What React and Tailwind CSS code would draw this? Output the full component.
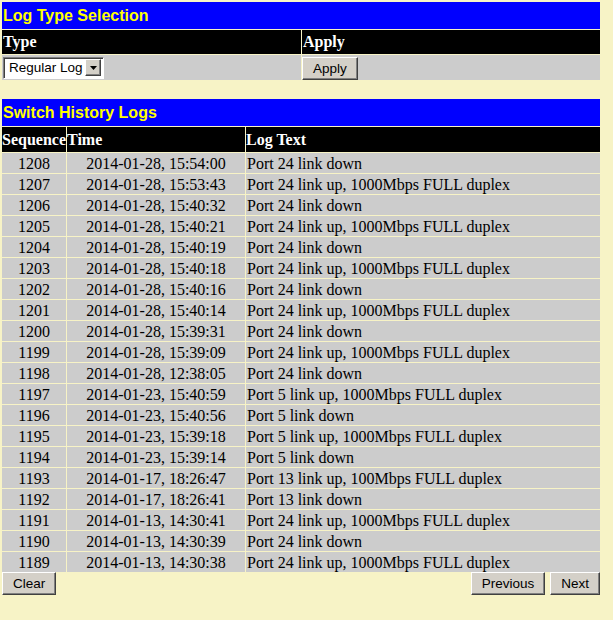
// App.jsx — Switch history log page (Log Type Selection + Switch History Logs table)

const logs = [
    [1208, '2014-01-28, 15:54:00', 'Port 24 link down'],
    [1207, '2014-01-28, 15:53:43', 'Port 24 link up, 1000Mbps FULL duplex'],
    [1206, '2014-01-28, 15:40:32', 'Port 24 link down'],
    [1205, '2014-01-28, 15:40:21', 'Port 24 link up, 1000Mbps FULL duplex'],
    [1204, '2014-01-28, 15:40:19', 'Port 24 link down'],
    [1203, '2014-01-28, 15:40:18', 'Port 24 link up, 1000Mbps FULL duplex'],
    [1202, '2014-01-28, 15:40:16', 'Port 24 link down'],
    [1201, '2014-01-28, 15:40:14', 'Port 24 link up, 1000Mbps FULL duplex'],
    [1200, '2014-01-28, 15:39:31', 'Port 24 link down'],
    [1199, '2014-01-28, 15:39:09', 'Port 24 link up, 1000Mbps FULL duplex'],
    [1198, '2014-01-28, 12:38:05', 'Port 24 link down'],
    [1197, '2014-01-23, 15:40:59', 'Port 5 link up, 1000Mbps FULL duplex'],
    [1196, '2014-01-23, 15:40:56', 'Port 5 link down'],
    [1195, '2014-01-23, 15:39:18', 'Port 5 link up, 1000Mbps FULL duplex'],
    [1194, '2014-01-23, 15:39:14', 'Port 5 link down'],
    [1193, '2014-01-17, 18:26:47', 'Port 13 link up, 100Mbps FULL duplex'],
    [1192, '2014-01-17, 18:26:41', 'Port 13 link down'],
    [1191, '2014-01-13, 14:30:41', 'Port 24 link up, 1000Mbps FULL duplex'],
    [1190, '2014-01-13, 14:30:39', 'Port 24 link down'],
    [1189, '2014-01-13, 14:30:38', 'Port 24 link up, 1000Mbps FULL duplex'],
]

function Button({ children }) {
    return (
        <button className="h-[23px] px-[10px] bg-[#d4d0c8] text-black text-[13.5px] leading-none font-['Liberation_Sans',Arial,sans-serif] border border-t-white border-l-white border-b-[#404040] border-r-[#404040] shadow-[inset_-1px_-1px_#808080]">
            {children}
        </button>
    )
}

function Title({ children, colSpan }) {
    return (
        <tr>
            <td colSpan={colSpan} className="h-[27px] p-0 pl-[1px] bg-[#0000ff] text-[#ffff00] text-[16px] font-bold font-['Liberation_Sans',Arial,sans-serif]">
                {children}
            </td>
        </tr>
    )
}

function Th({ children, className = '' }) {
    return (
        <td className={`p-0 pl-[1px] bg-black text-white text-[16px] font-bold font-['Liberation_Serif','Times_New_Roman',serif] ${className}`}>
            {children}
        </td>
    )
}

export default function App() {
    return (
        <div className="min-h-[620px] w-[613px] bg-[#f7f3c6] pl-px pt-px">
            {/* Log type selection */}
            <table className="w-[600px] table-fixed border-separate border-spacing-[1px]">
                <colgroup>
                    <col className="w-[299px]" />
                    <col />
                </colgroup>
                <tbody>
                    <Title colSpan={2}>Log Type Selection</Title>
                    <tr className="h-[24px]">
                        <Th>Type</Th>
                        <Th>Apply</Th>
                    </tr>
                    <tr className="h-[25px]">
                        <td className="p-0 pl-[1px] bg-[#cccccc] align-middle">
                            <div className="flex items-center h-[22px] w-[101px] bg-white border border-t-[#808080] border-l-[#808080] border-b-white border-r-white shadow-[inset_1px_1px_#404040]">
                                <span className="flex-1 pl-[5px] pt-px text-[13.5px] text-black font-['Liberation_Sans',Arial,sans-serif]">Regular Log</span>
                                <span className="mr-[2px] flex h-[17px] w-[16px] items-center justify-center bg-[#d4d0c8] border border-t-white border-l-white border-b-[#404040] border-r-[#404040] shadow-[inset_-1px_-1px_#808080]">
                                    <svg width="7" height="4" viewBox="0 0 7 4"><path d="M0 0h7L3.5 4z" fill="black" /></svg>
                                </span>
                            </div>
                        </td>
                        <td className="p-0 bg-[#cccccc] align-middle">
                            <Button>Apply</Button>
                        </td>
                    </tr>
                </tbody>
            </table>

            {/* Switch history logs */}
            <table className="mt-[17px] w-[600px] table-fixed border-separate border-spacing-[1px]">
                <colgroup>
                    <col className="w-[64px]" />
                    <col className="w-[178px]" />
                    <col />
                </colgroup>
                <tbody>
                    <Title colSpan={3}>Switch History Logs</Title>
                    <tr className="h-[25px]">
                        <Th className="!pl-0">Sequence</Th>
                        <Th className="!pl-0">Time</Th>
                        <Th className="!pl-0">Log Text</Th>
                    </tr>
                    {logs.map(([seq, time, text]) => (
                        <tr key={seq} className="h-[20px] bg-[#cccccc] text-black text-[16px] leading-[19px] font-['Liberation_Serif','Times_New_Roman',serif]">
                            <td className="p-0 pt-px text-center">{seq}</td>
                            <td className="p-0 pt-px text-center">{time}</td>
                            <td className="p-0 pt-px pl-[1px] whitespace-nowrap">{text}</td>
                        </tr>
                    ))}
                </tbody>
            </table>

            <div className="-mt-px ml-px flex w-[598px] items-center justify-between">
                <Button>Clear</Button>
                <div className="flex gap-[5px]">
                    <Button>Previous</Button>
                    <Button>Next</Button>
                </div>
            </div>
        </div>
    )
}
